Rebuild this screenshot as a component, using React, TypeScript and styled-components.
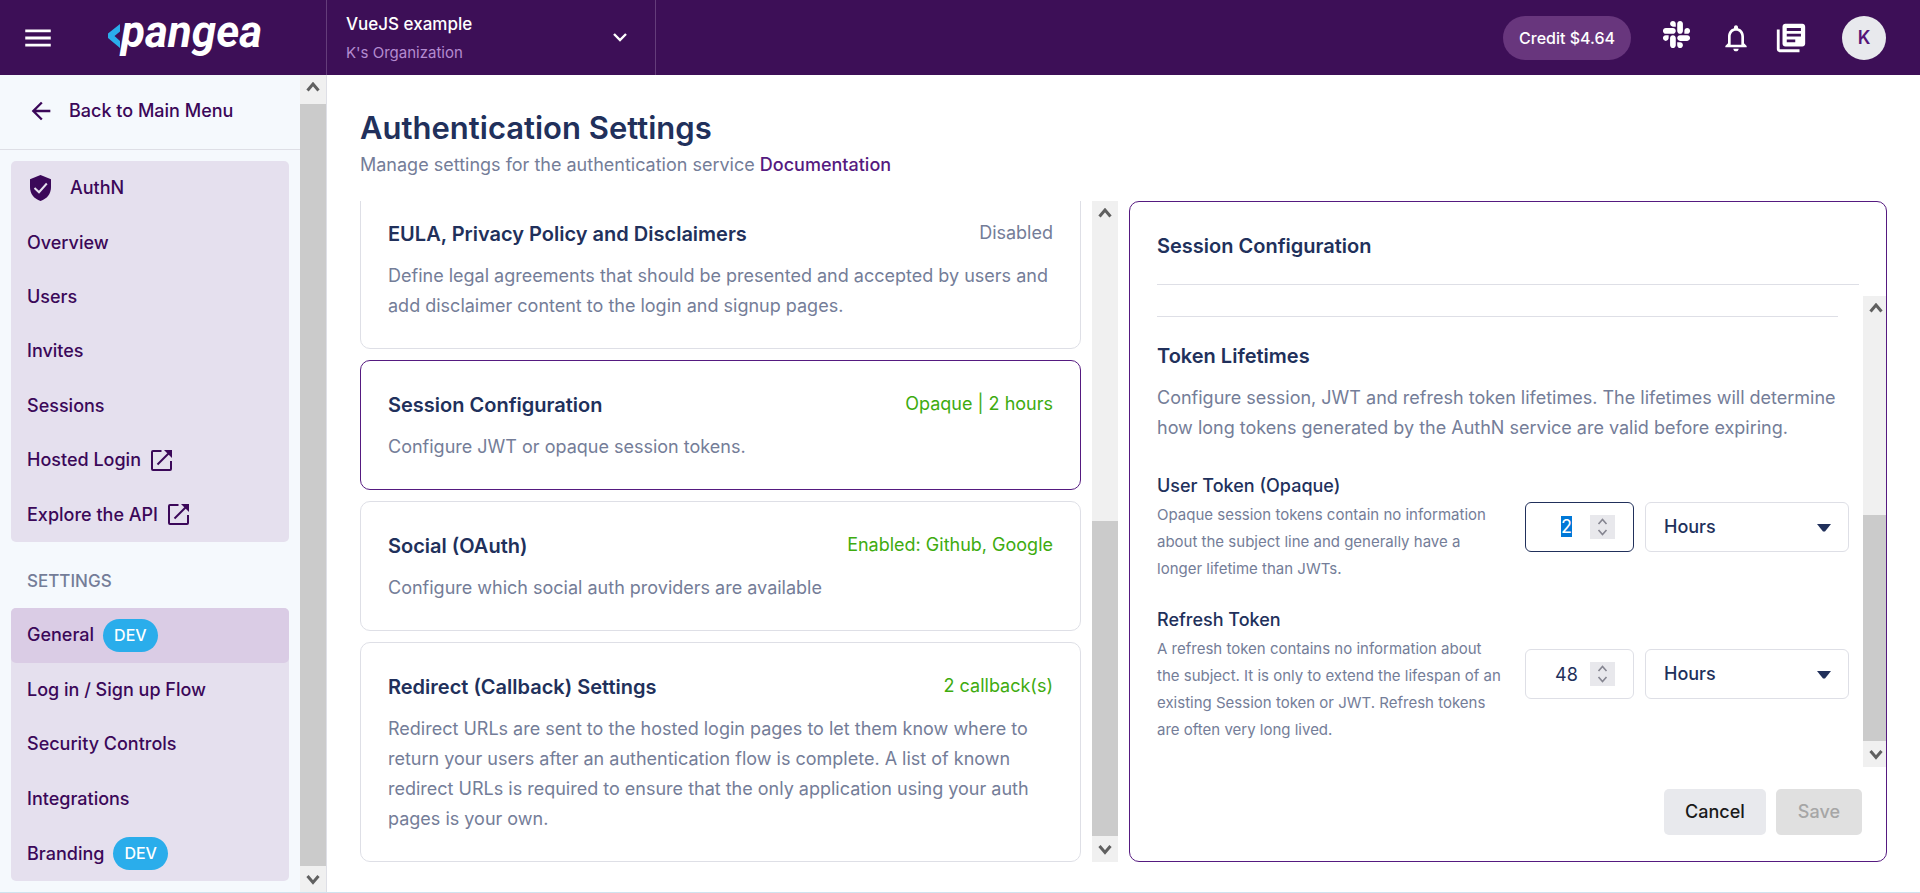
import React, { useEffect, useRef } from "react";
import styled, { createGlobalStyle, css } from "styled-components";
import { FaSlack } from "react-icons/fa";
import { MdArrowBack, MdLibraryBooks, MdMenu, MdNotificationsNone } from "react-icons/md";

const color = {
  header: "#3d0f57",
  headerLine: "#643d7a",
  purple: "#3b0859",
  accent: "#551a80",
  navy: "#21305b",
  muted: "#747d98",
  line: "#dedfe6",
  green: "#3eab0f",
  blue: "#2aadeb",
};

const GlobalStyle = createGlobalStyle`
  *, *::before, *::after { box-sizing: border-box; }
  body {
    margin: 0;
    background: #fff;
    color: ${color.navy};
    font-family: Inter, "Noto Sans", sans-serif;
    font-size: 18px;
    line-height: 30px;
  }
  h1, h2, h3, p, ul { margin: 0; padding: 0; }
  ul { list-style: none; }
  a { color: inherit; text-decoration: none; }
  button, input, select { font: inherit; color: inherit; }
  svg { display: block; flex: none; }
`;

const Page = styled.div`
  display: flex;
  flex-direction: column;
  height: 100vh;
  min-height: 720px;
  border-bottom: 1px solid #cfe3ee;
`;

/* ---------- top bar ---------- */

const TopBar = styled.header`
  display: flex;
  flex: none;
  height: 75px;
  background: ${color.header};
  color: #fff;
`;

const Brand = styled.div`
  display: flex;
  align-items: center;
  width: 327px;
  padding-left: 21px;
  gap: 53px;
  border-right: 1px solid ${color.headerLine};
`;

const IconButton = styled.button`
  display: flex;
  padding: 0;
  border: 0;
  background: none;
  color: inherit;
  cursor: pointer;
`;

const Wordmark = styled.text`
  fill: #fff;
  font: italic 700 44px Roboto, sans-serif;
`;

const ProjectSwitch = styled.button`
  display: flex;
  align-items: center;
  justify-content: space-between;
  width: 329px;
  padding: 0 28px 0 19px;
  border: 0;
  border-right: 1px solid ${color.headerLine};
  background: none;
  color: #fff;
  text-align: left;
  cursor: pointer;
`;

const ProjectName = styled.span`
  display: block;
  font-weight: 500;
  font-size: 17px;
  line-height: 30px;
`;

const OrgName = styled.span`
  display: block;
  color: #b48bd0;
  font-size: 15px;
  line-height: 27px;
`;

const TopActions = styled.div`
  display: flex;
  align-items: center;
  margin-left: auto;
  padding-right: 34px;
`;

const Credit = styled.a`
  padding: 0 16px;
  border-radius: 22px;
  background: #68367d;
  font-weight: 500;
  font-size: 16px;
  line-height: 44px;
`;

const ActionIcons = styled.div`
  display: flex;
  align-items: center;
  gap: 22px;
  margin: 0 34px 0 30px;

  button:first-child {
    margin: 0 6px 6px 0;
  }
`;

const Avatar = styled.button`
  width: 44px;
  height: 44px;
  padding: 0;
  border: 0;
  border-radius: 50%;
  background: #e8e9ed;
  color: #551478;
  font-weight: 600;
`;

/* ---------- scroll bar ---------- */

const Track = styled.div`
  display: flex;
  flex-direction: column;
  flex: none;
  width: 26px;
  background: #f0f0f0;
`;

const TrackButton = styled.button`
  display: flex;
  align-items: center;
  justify-content: center;
  flex: none;
  height: 26px;
  padding: 0;
  border: 0;
  background: none;
  color: #606060;
`;

const TrackGap = styled.div<{ $grow: number }>`
  flex: ${(p) => p.$grow} 0 0;
`;

const Thumb = styled.div<{ $grow: number }>`
  flex: ${(p) => p.$grow} 0 0;
  background: #cbcbcb;
`;

function Scrollbar({ before, thumb }: { before: number; thumb: number }) {
  return (
    <Track>
      <TrackButton aria-label="Scroll up" tabIndex={-1}>
        <svg width="14" height="12" viewBox="0 0 14 12">
          <path d="M1.500 8.500 7 2l5.500 6.500" fill="none" stroke="currentColor" strokeWidth="3" />
        </svg>
      </TrackButton>
      <TrackGap $grow={before} />
      <Thumb $grow={thumb} />
      <TrackButton aria-label="Scroll down" tabIndex={-1}>
        <svg width="14" height="12" viewBox="0 0 14 12">
          <path d="M1.500 3 7 9.500 12.500 3" fill="none" stroke="currentColor" strokeWidth="3" />
        </svg>
      </TrackButton>
    </Track>
  );
}

/* ---------- side bar ---------- */

const Body = styled.div`
  display: flex;
  flex: 1;
  min-height: 0;
`;

const Sidebar = styled.aside`
  display: flex;
  flex: none;
  width: 327px;
  border-right: 1px solid ${color.line};
  background: #f5f9fd;
`;

const SidebarContent = styled.div`
  flex: 1;
  overflow: hidden;
  color: ${color.purple};
  font-weight: 500;
`;

const BackLink = styled.a`
  display: flex;
  align-items: center;
  gap: 14px;
  height: 75px;
  padding: 0 27px 3px;
  border-bottom: 1px solid ${color.line};
`;

const NavList = styled.ul<{ $height: number }>`
  display: grid;
  grid-auto-rows: 1fr;
  min-height: ${(p) => p.$height}px;
  margin: 0 11px;
  border-radius: 5px;
  background: #e5e0ee;
`;

const Nav = styled.nav`
  padding-top: 11px;
`;

const NavLink = styled.a<{ $active?: boolean; $lead?: boolean }>`
  display: flex;
  align-items: center;
  gap: 9px;
  height: 100%;
  padding: 0 16px;

  ${(p) =>
    p.$lead &&
    css`
      gap: 19px;
      padding: 0 19px;
    `}
  ${(p) =>
    p.$active &&
    css`
      border-radius: 5px;
      background: #dacce5;
    `}
`;

const NavHeading = styled.h2`
  padding: 24px 27px 12px;
  color: ${color.muted};
  font-weight: 500;
  font-size: 17px;
  line-height: 30px;
`;

const DevBadge = styled.span`
  padding: 0 11px;
  border-radius: 17px;
  background: ${color.blue};
  color: #fff;
  font-size: 16px;
  line-height: 33px;
`;

/* ---------- main area ---------- */

const Main = styled.main`
  display: flex;
  flex: 1;
  flex-direction: column;
  min-width: 0;
  padding: 33px 33px 30px;
`;

const Title = styled.h1`
  font-weight: 600;
  font-size: 31px;
  line-height: 40px;
`;

const Subtitle = styled.p`
  margin: 2px 0 21px;
  color: ${color.muted};

  a {
    color: ${color.accent};
    font-weight: 500;
  }
`;

const Columns = styled.div`
  display: grid;
  grid-template-columns: minmax(0, 721fr) 26px minmax(0, 758fr);
  gap: 11px;
  flex: 1;
  min-height: 0;
`;

const CardList = styled.div`
  display: flex;
  flex-direction: column;
  justify-content: flex-end;
  gap: 11px;
  overflow: hidden;
`;

const Card = styled.article<{ $selected?: boolean }>`
  flex: none;
  padding: 28px 27px 27px;
  border: 1px solid ${(p) => (p.$selected ? color.accent : color.line)};
  border-radius: 10px;
`;

const CardHead = styled.div`
  display: flex;
  justify-content: space-between;
  margin-bottom: 11px;
`;

const Heading = styled.h2`
  font-weight: 600;
  font-size: 20px;
  line-height: 32px;
`;

const Status = styled.span<{ $on?: boolean }>`
  color: ${(p) => (p.$on ? color.green : color.muted)};
`;

const Description = styled.p`
  color: ${color.muted};
`;

const Panel = styled.section`
  display: flex;
  flex-direction: column;
  overflow: hidden;
  border: 1px solid ${color.accent};
  border-radius: 10px;
`;

const PanelHead = styled.div`
  margin: 0 27px 11px;
  padding: 28px 0 22px;
  border-bottom: 1px solid ${color.line};
`;

const PanelScroll = styled.div`
  display: flex;
  flex: 1;
  min-height: 0;
  margin-right: -3px;
`;

const PanelContent = styled.form`
  display: flex;
  flex: 1;
  flex-direction: column;
  justify-content: flex-end;
  min-width: 0;
  overflow: hidden;
  padding: 0 14px 24px 27px;
`;

const SectionIntro = styled.div`
  margin-right: 11px;
  padding: 23px 0 5px;
  border-top: 1px solid ${color.line};

  h2 {
    margin-bottom: 11px;
  }
`;

const TokenRow = styled.div`
  display: grid;
  grid-template-columns: minmax(0, 1fr) 109px 204px;
  align-items: center;
  gap: 11px;
  margin-top: 23px;
`;

const TokenLabel = styled.label`
  display: block;
  font-weight: 500;
`;

const TokenHint = styled.p`
  padding-right: 8px;
  color: ${color.muted};
  font-size: 15px;
  line-height: 27px;
`;

const Field = styled.div`
  position: relative;
`;

const NumberInput = styled.input`
  width: 100%;
  height: 50px;
  padding: 0 41px 0 15px;
  border: 1px solid ${color.line};
  border-radius: 6px;
  outline: none;
  background: #fff;
  text-align: center;
  appearance: textfield;

  &::-webkit-inner-spin-button {
    display: none;
  }
  &:focus {
    border-color: ${color.navy};
  }
  &::selection {
    background: #0078d7;
    color: #fff;
  }
`;

const Stepper = styled.span`
  position: absolute;
  top: 13px;
  right: 19px;
  display: flex;
  align-items: center;
  justify-content: center;
  width: 25px;
  height: 24px;
  background: #e8e8ec;
  color: #858590;
  pointer-events: none;
`;

const Select = styled.select`
  width: 100%;
  height: 50px;
  padding: 0 18px;
  border: 1px solid ${color.line};
  border-radius: 6px;
  background: #fff;
  appearance: none;
  font-weight: 500;
`;

const SelectArrow = styled.svg`
  position: absolute;
  top: 22px;
  right: 18px;
  pointer-events: none;
`;

const PanelFoot = styled.div`
  display: flex;
  justify-content: flex-end;
  gap: 10px;
  padding: 22px 24px 26px;
`;

const Button = styled.button`
  height: 46px;
  padding: 0 21px;
  border: 0;
  border-radius: 5px;
  background: #e8e9ed;
  color: #1a1a1a;
  font-weight: 500;

  &:disabled {
    padding: 0 22px;
    background: #e0e0e0;
    color: #a6a6a6;
  }
`;

type NavItem = { label: string; external?: boolean; dev?: boolean; active?: boolean };

const serviceNav: NavItem[] = [
  { label: "Overview" },
  { label: "Users" },
  { label: "Invites" },
  { label: "Sessions" },
  { label: "Hosted Login", external: true },
  { label: "Explore the API", external: true },
];

const settingsNav: NavItem[] = [
  { label: "General", dev: true, active: true },
  { label: "Log in / Sign up Flow" },
  { label: "Security Controls" },
  { label: "Integrations" },
  { label: "Branding", dev: true },
];

const cards = [
  {
    title: "EULA, Privacy Policy and Disclaimers",
    status: "Disabled",
    text: "Define legal agreements that should be presented and accepted by users and add disclaimer content to the login and signup pages.",
  },
  {
    title: "Session Configuration",
    status: "Opaque | 2 hours",
    on: true,
    selected: true,
    text: "Configure JWT or opaque session tokens.",
  },
  {
    title: "Social (OAuth)",
    status: "Enabled: Github, Google",
    on: true,
    text: "Configure which social auth providers are available",
  },
  {
    title: "Redirect (Callback) Settings",
    status: "2 callback(s)",
    on: true,
    text: "Redirect URLs are sent to the hosted login pages to let them know where to return your users after an authentication flow is complete. A list of known redirect URLs is required to ensure that the only application using your auth pages is your own.",
  },
];

function ShieldIcon() {
  return (
    <svg width="21" height="26" viewBox="0 0 21 26">
      <path d="M10.500 0 21 4.200V12c0 7-4 11.800-10.500 14C4 23.800 0 19 0 12V4.200z" fill="currentColor" />
      <path d="M4.500 13 9 17.200 16.800 8.500" fill="none" stroke="#e5e0ee" strokeWidth="2" />
    </svg>
  );
}

function ExternalIcon() {
  return (
    <svg width="22" height="21" viewBox="-1 0 22 21" fill="none" stroke="currentColor" strokeWidth="2">
      <path d="M10.500 1H2a1 1 0 0 0-1 1v17a1 1 0 0 0 1 1h17a1 1 0 0 0 1-1v-8" />
      <path d="M6.500 14.500 18.500 2.500" />
      <path d="M13 0h8v8l-2.500-2.500-3-3z" fill="currentColor" stroke="none" />
    </svg>
  );
}

function NavItems({ items }: { items: NavItem[] }) {
  return (
    <>
      {items.map((item) => (
        <li key={item.label}>
          <NavLink href="#" $active={item.active}>
            {item.label}
            {item.external && <ExternalIcon />}
            {item.dev && <DevBadge>DEV</DevBadge>}
          </NavLink>
        </li>
      ))}
    </>
  );
}

type TokenProps = { id: string; label: string; hint: string; value: number; focused?: boolean };

function TokenLifetime({ id, label, hint, value, focused }: TokenProps) {
  const input = useRef<HTMLInputElement>(null);

  useEffect(() => {
    if (focused) {
      input.current?.focus();
      input.current?.select();
    }
  }, [focused]);

  return (
    <TokenRow>
      <div>
        <TokenLabel htmlFor={id}>{label}</TokenLabel>
        <TokenHint>{hint}</TokenHint>
      </div>
      <Field>
        <NumberInput ref={input} id={id} type="number" defaultValue={value} />
        <Stepper>
          <svg width="11" height="18" viewBox="0 0 11 18" fill="none" stroke="currentColor" strokeWidth="1.600">
            <path d="M1.500 6 5.500 1.500 9.500 6M1.500 12l4 4.500 4-4.500" />
          </svg>
        </Stepper>
      </Field>
      <Field>
        <Select aria-label={`${label} unit`} defaultValue="Hours">
          <option>Minutes</option>
          <option>Hours</option>
          <option>Days</option>
        </Select>
        <SelectArrow width="14" height="8" viewBox="0 0 14 8">
          <path d="M0 0h14L8 7.500H6z" fill={color.navy} />
        </SelectArrow>
      </Field>
    </TokenRow>
  );
}

export default function App() {
  return (
    <>
      <GlobalStyle />
      <Page>
        <TopBar>
          <Brand>
            <IconButton aria-label="Toggle menu">
              <MdMenu size={34} />
            </IconButton>
            <a href="#">
              <svg width="170" height="64" viewBox="0 0 170 64">
                <path d="M12 18v7.500L6.500 30l5.500 5v7L0 32v-4.500z" fill={color.blue} />
                <Wordmark x="13" y="41">
                  pangea
                </Wordmark>
              </svg>
            </a>
          </Brand>
          <ProjectSwitch>
            <span>
              <ProjectName>VueJS example</ProjectName>
              <OrgName>K's Organization</OrgName>
            </span>
            <svg width="14" height="9" viewBox="0 0 14 9">
              <path d="M1 1l6 6 6-6" fill="none" stroke="#fff" strokeWidth="2.400" />
            </svg>
          </ProjectSwitch>
          <TopActions>
            <Credit href="#">Credit $4.64</Credit>
            <ActionIcons>
              <IconButton aria-label="Slack">
                <FaSlack size={31} />
              </IconButton>
              <IconButton aria-label="Notifications">
                <MdNotificationsNone size={32} />
              </IconButton>
              <IconButton aria-label="Library">
                <MdLibraryBooks size={34} />
              </IconButton>
            </ActionIcons>
            <Avatar>K</Avatar>
          </TopActions>
        </TopBar>
        <Body>
          <Sidebar>
            <SidebarContent>
              <BackLink href="#">
                <MdArrowBack size={28} />
                Back to Main Menu
              </BackLink>
              <Nav>
                <NavList $height={381}>
                  <li>
                    <NavLink href="#" $lead>
                      <ShieldIcon />
                      AuthN
                    </NavLink>
                  </li>
                  <NavItems items={serviceNav} />
                </NavList>
                <NavHeading>SETTINGS</NavHeading>
                <NavList $height={273}>
                  <NavItems items={settingsNav} />
                </NavList>
              </Nav>
            </SidebarContent>
            <Scrollbar before={3} thumb={761} />
          </Sidebar>
          <Main>
            <Title>Authentication Settings</Title>
            <Subtitle>
              Manage settings for the authentication service <a href="#">Documentation</a>
            </Subtitle>
            <Columns>
              <CardList>
                {cards.map((card) => (
                  <Card key={card.title} $selected={card.selected}>
                    <CardHead>
                      <Heading>{card.title}</Heading>
                      <Status $on={card.on}>{card.status}</Status>
                    </CardHead>
                    <Description>{card.text}</Description>
                  </Card>
                ))}
              </CardList>
              <Scrollbar before={294} thumb={315} />
              <Panel>
                <PanelHead>
                  <Heading>Session Configuration</Heading>
                </PanelHead>
                <PanelScroll>
                  <PanelContent>
                    <SectionIntro>
                      <Heading>Token Lifetimes</Heading>
                      <Description>
                        Configure session, JWT and refresh token lifetimes. The lifetimes will determine how long
                        tokens generated by the AuthN service are valid before expiring.
                      </Description>
                    </SectionIntro>
                    <TokenLifetime
                      id="user-token"
                      label="User Token (Opaque)"
                      hint="Opaque session tokens contain no information about the subject line and generally have a longer lifetime than JWTs."
                      value={2}
                      focused
                    />
                    <TokenLifetime
                      id="refresh-token"
                      label="Refresh Token"
                      hint="A refresh token contains no information about the subject. It is only to extend the lifespan of an existing Session token or JWT. Refresh tokens are often very long lived."
                      value={48}
                    />
                  </PanelContent>
                  <Scrollbar before={193} thumb={226} />
                </PanelScroll>
                <PanelFoot>
                  <Button>Cancel</Button>
                  <Button disabled>Save</Button>
                </PanelFoot>
              </Panel>
            </Columns>
          </Main>
        </Body>
      </Page>
    </>
  );
}
